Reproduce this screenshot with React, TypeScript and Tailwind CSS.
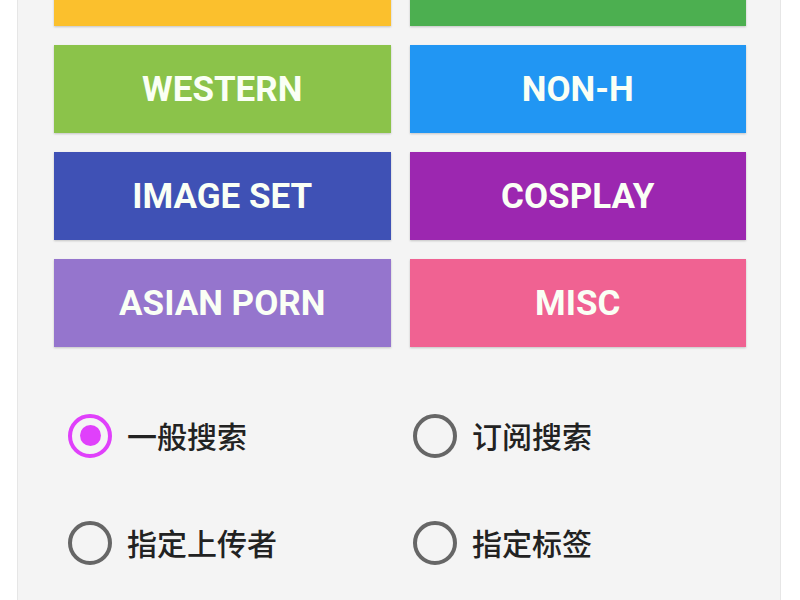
import React from "react";

const cats: { label: string; cls: string }[] = [
  { label: "ARTIST CG", cls: "bg-[#fbc02d]" },
  { label: "GAME CG", cls: "bg-[#4caf50]" },
  { label: "WESTERN", cls: "bg-[#8bc34a]" },
  { label: "NON-H", cls: "bg-[#2196f3]" },
  { label: "IMAGE SET", cls: "bg-[#3f51b5]" },
  { label: "COSPLAY", cls: "bg-[#9c27b0]" },
  { label: "ASIAN PORN", cls: "bg-[#9575cd]" },
  { label: "MISC", cls: "bg-[#f06292]" },
];

const radios: { label: string; checked: boolean }[] = [
  { label: "一般搜索", checked: true },
  { label: "订阅搜索", checked: false },
  { label: "指定上传者", checked: false },
  { label: "指定标签", checked: false },
];

function Radio({ checked }: { checked: boolean }) {
  return checked ? (
    <div className="w-[44px] h-[44px] shrink-0 rounded-full border-[4px] border-[#e040fb] flex items-center justify-center">
      <div className="w-[21px] h-[21px] rounded-full bg-[#e040fb]" />
    </div>
  ) : (
    <div className="w-[44px] h-[44px] shrink-0 rounded-full border-[4px] border-[#666666]" />
  );
}

export default function App() {
  return (
    <div className="w-[800px] h-[600px] overflow-hidden bg-white">
      <div className="ml-[17px] w-[764px] h-[600px] bg-[#f4f4f4] border-x border-[#e6e6e6] overflow-hidden">
        <div
          className="grid grid-cols-2 gap-x-[19px] gap-y-[19px] pl-[36px] pr-[34px] mt-[-62px]"
          style={{ fontFamily: "Roboto, 'Liberation Sans', sans-serif" }}
        >
          {cats.map((c) => (
            <div
              key={c.label}
              className={`${c.cls} h-[88px] flex items-center justify-center shadow-[0_1px_2px_rgba(0,0,0,0.2)]`}
            >
              <span className="text-[#fafff5] font-bold text-[35px] leading-none">{c.label}</span>
            </div>
          ))}
        </div>
        <div
          className="grid grid-cols-[345px_1fr] mt-[35px] pl-[50px]"
          style={{ fontFamily: "'Noto Sans CJK SC', 'Noto Sans', sans-serif" }}
        >
          {radios.map((r) => (
            <div key={r.label} className="h-[107px] flex items-center gap-[15px]">
              <Radio checked={r.checked} />
              <span className="text-[30px] font-medium text-[#222222]">{r.label}</span>
            </div>
          ))}
        </div>
      </div>
    </div>
  );
}
